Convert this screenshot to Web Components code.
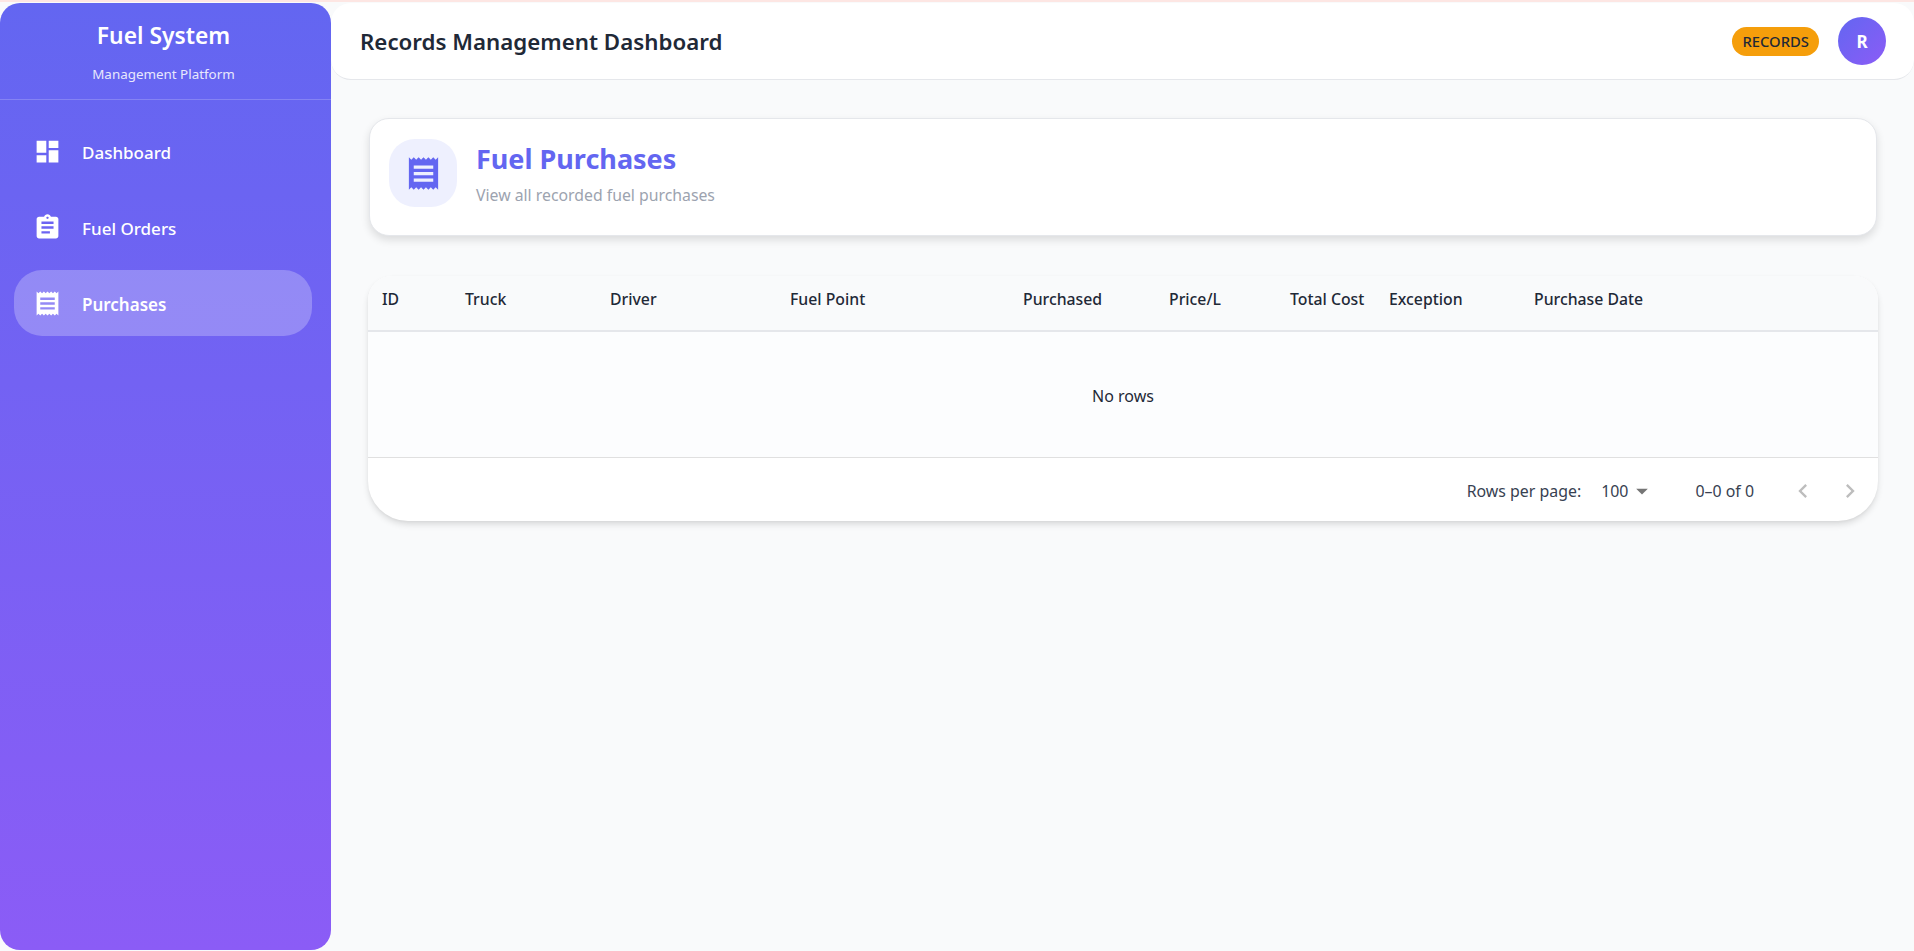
<!DOCTYPE html>
<html lang="en"><head><meta charset="utf-8"><title>Fuel System</title>
<style>
html,body{margin:0;height:100%;background:#f9fafb;overflow:hidden}
body{font-family:"Noto Sans","Open Sans",sans-serif;color:#1f2937}
</style></head><body>
<template id="t-app"><style>
:host{display:grid;grid-template-columns:331px 1fr;height:951px;box-sizing:border-box;padding:3px 0 1px;background:linear-gradient(#fde6e3 0 2px,#f9fafb 2px)}
main{display:flex;flex-direction:column;min-width:0}
.content{display:flex;flex-direction:column;gap:41px;padding:38px 37px 0 38px}
</style><slot name="side"></slot><main><slot name="head"></slot><div class="content"><slot></slot></div></main></template>

<template id="t-side"><style>
:host{display:flex;flex-direction:column;height:100%;color:#fff;border-radius:20px;background:linear-gradient(180deg,#6366f1,#8b5cf6);overflow:hidden}
.brand{height:97px;box-sizing:border-box;border-bottom:1px solid rgba(255,255,255,.2);text-align:center;padding:18px 4px 0 0}
h1{margin:0;font-size:22.8px;font-weight:600;line-height:30px}
p{margin:14px 0 0;font-size:13.4px;line-height:18px;opacity:.85}
nav{display:flex;flex-direction:column;gap:10px;padding:18px 19px 0 14px}
</style><div class="brand"><h1>Fuel System</h1><p>Management Platform</p></div><nav><slot></slot></nav></template>

<template id="t-nav"><style>
:host{display:flex;align-items:center;gap:20px;height:66px;padding-left:19px;border-radius:28px;font-size:17px;font-weight:500;color:#fff;flex:none}
:host([active]){background:rgba(255,255,255,.25);font-weight:600}
svg{width:29px;height:29px;fill:currentColor;flex:none}
span{position:relative;top:1px}
</style><svg viewBox="0 0 24 24"><path></path></svg><span><slot></slot></span></template>

<template id="t-top"><style>
:host{display:flex;align-items:center;justify-content:space-between;height:77px;box-sizing:border-box;padding:0 28px 0 29px;background:#fff;border-bottom:1px solid #e5e7eb;border-radius:20px}
h2{margin:0;font-size:22.3px;font-weight:600;color:#1f2937}
.r{display:flex;align-items:center;gap:19px}
.badge{display:flex;align-items:center;height:29px;padding:0 10px;border-radius:15px;background:#f59e0b;color:#1f2937;font-size:14.8px;font-weight:500}
.av{width:48px;height:48px;border-radius:50%;display:grid;place-items:center;background:linear-gradient(135deg,#6366f1,#8b5cf6);color:#fff;font-size:17px;font-weight:700}
</style><h2><slot></slot></h2><div class="r"><span class="badge">RECORDS</span><span class="av">R</span></div></template>

<template id="t-page"><style>
:host{display:flex;align-items:flex-start;gap:19px;height:118px;box-sizing:border-box;padding:20px 19px 0;background:#fff;border:1px solid #e5e7eb;border-radius:20px;box-shadow:0 4px 8px rgba(0,0,0,.12)}
.ic{width:68px;height:68px;border-radius:26px;background:#eef0fe;display:grid;place-items:center;color:#6366f1}
svg{width:39px;height:39px;fill:currentColor}
.t{padding-top:1px}
h3{margin:0;font-size:27px;line-height:38px;font-weight:700;color:#6366f1}
p{margin:6px 0 0;font-size:15.8px;line-height:22px;color:#9ca3af}
</style><div class="ic"><svg viewBox="0 0 24 24"><path d="M18 17H6v-2h12v2zm0-4H6v-2h12v2zm0-4H6V7h12v2zM3 22l1.5-1.5L6 22l1.5-1.5L9 22l1.5-1.5L12 22l1.5-1.5L15 22l1.5-1.5L18 22l1.5-1.5L21 22V2l-1.5 1.5L18 2l-1.5 1.5L15 2l-1.5 1.5L12 2l-1.5 1.5L9 2 7.5 3.5 6 2 4.5 3.5 3 2v20z"/></svg></div><div class="t"><h3><slot name="title"></slot></h3><p><slot name="sub"></slot></p></div></template>

<template id="t-grid"><style>
:host{display:block;border-radius:24px 24px 40px 40px;background:#fff;box-shadow:0 4px 7px -1px rgba(0,0,0,.14),0 1px 3px rgba(0,0,0,.03);overflow:hidden;margin:-1px -1px 0;color:#1f2937}
.h{display:grid;grid-template-columns:83px 145px 180px 233px 146px 121px 99px 145px 1fr;height:56px;box-sizing:border-box;padding:0 0 9px 4px;align-items:center;background:#f9fafb;border-bottom:2px solid #e5e7eb;font-size:15.8px;font-weight:500}
.h ::slotted(*){padding-left:10px;white-space:nowrap}
.b{display:grid;place-items:center;background:#fcfdfe;border-bottom:1px solid #e0e0e0;font-size:16px;padding-top:2px;height:123px}
.f{display:flex;align-items:center;justify-content:flex-end;height:63px;box-sizing:border-box;padding:3px 14px 0 0;font-size:15.9px;color:#374151}
.s{display:flex;align-items:center;margin-left:20px}
.s svg{width:28px;height:28px;fill:#757575}
.c{margin-left:39px;margin-right:35px}
.nav{width:28px;height:28px;fill:#bdbdbd;flex:none}
.nav+.nav{margin-left:19px}
</style><div class="h"><slot name="col"></slot></div><div class="b">No rows</div><div class="f"><span>Rows per page:</span><span class="s">100<svg viewBox="0 0 24 24"><path d="M7 10l5 5 5-5z"/></svg></span><span class="c">0–0 of 0</span><svg class="nav" viewBox="0 0 24 24"><path d="M15.41 7.41 14 6l-6 6 6 6 1.41-1.41L10.83 12z"/></svg><svg class="nav" viewBox="0 0 24 24"><path d="M10 6 8.59 7.41 13.17 12l-4.58 4.59L10 18l6-6z"/></svg></div></template>

<fuel-app>
  <fuel-sidebar slot="side">
    <fuel-nav icon="M3 13h8V3H3v10zm0 8h8v-6H3v6zm10 0h8V11h-8v10zm0-18v6h8V3h-8z">Dashboard</fuel-nav>
    <fuel-nav icon="M19 3h-4.18C14.4 1.84 13.3 1 12 1c-1.3 0-2.4.84-2.82 2H5c-1.1 0-2 .9-2 2v14c0 1.1.9 2 2 2h14c1.1 0 2-.9 2-2V5c0-1.1-.9-2-2-2zm-7 0c.55 0 1 .45 1 1s-.45 1-1 1-1-.45-1-1 .45-1 1-1zm2 14H7v-2h7v2zm3-4H7v-2h10v2zm0-4H7V7h10v2z">Fuel Orders</fuel-nav>
    <fuel-nav active icon="M18 17H6v-2h12v2zm0-4H6v-2h12v2zm0-4H6V7h12v2zM3 22l1.5-1.5L6 22l1.5-1.5L9 22l1.5-1.5L12 22l1.5-1.5L15 22l1.5-1.5L18 22l1.5-1.5L21 22V2l-1.5 1.5L18 2l-1.5 1.5L15 2l-1.5 1.5L12 2l-1.5 1.5L9 2 7.5 3.5 6 2 4.5 3.5 3 2v20z">Purchases</fuel-nav>
  </fuel-sidebar>
  <fuel-topbar slot="head">Records Management Dashboard</fuel-topbar>
  <fuel-page-head><span slot="title">Fuel Purchases</span><span slot="sub">View all recorded fuel purchases</span></fuel-page-head>
  <fuel-grid>
    <span slot="col">ID</span><span slot="col">Truck</span><span slot="col">Driver</span><span slot="col">Fuel Point</span><span slot="col">Purchased</span><span slot="col">Price/L</span><span slot="col">Total Cost</span><span slot="col">Exception</span><span slot="col">Purchase Date</span>
  </fuel-grid>
</fuel-app>
<script>
const mk=(name,tid,init)=>customElements.define(name,class extends HTMLElement{
  constructor(){super();this.attachShadow({mode:"open"}).appendChild(document.getElementById(tid).content.cloneNode(true));}
  connectedCallback(){init&&init(this)}
});
mk("fuel-app","t-app");mk("fuel-sidebar","t-side");
mk("fuel-nav","t-nav",e=>e.shadowRoot.querySelector("path").setAttribute("d",e.getAttribute("icon")));
mk("fuel-topbar","t-top");mk("fuel-page-head","t-page");mk("fuel-grid","t-grid");
</script></body></html>
